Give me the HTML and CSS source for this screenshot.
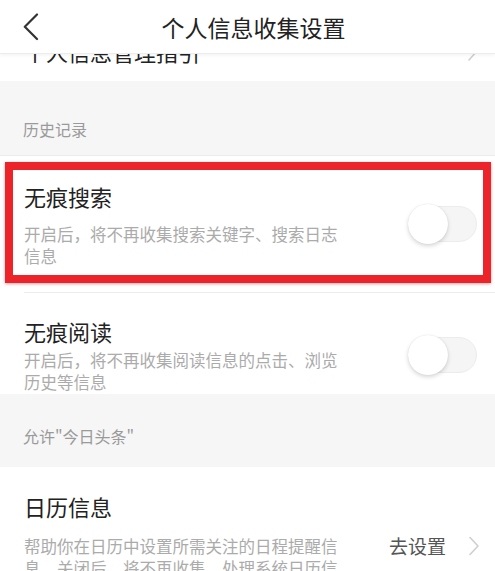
FILE: index.html
```html
<!DOCTYPE html>
<html lang="zh-CN">
<head>
<meta charset="utf-8">
<title>个人信息收集设置</title>
<link rel="stylesheet" href="styles.css">
</head>
<body>
<div class="screen">
  <header class="topbar">
    <div class="back">
      <svg width="16" height="28" viewBox="0 0 16 28"><path d="M14 1.5 L1.8 13.8 L14 26" fill="none" stroke="#333" stroke-width="2.2" stroke-linecap="round" stroke-linejoin="round"/></svg>
    </div>
    <div class="title">个人信息收集设置</div>
    <div class="spacer"></div>
  </header>
  <main class="content">
    <div class="row link-row clipped">
      <span class="row-title">个人信息管理指引</span>
      <svg class="chev" width="12" height="20" viewBox="0 0 12 20"><path d="M2 1 L10 10 L2 19" fill="none" stroke="#cfcfcf" stroke-width="1.6" stroke-linecap="round" stroke-linejoin="round"/></svg>
    </div>

    <div class="section section-first">历史记录</div>

    <div class="row-wrap marked">
      <div class="mark-box">
        <div class="row-text">
          <div class="row-title">无痕搜索</div>
          <div class="row-desc desc-loose">开启后，将不再收集搜索关键字、搜索日志信息</div>
        </div>
        <div class="switch"><div class="knob"></div></div>
      </div>
    </div>
    <div class="divider"></div>

    <div class="row toggle-row">
      <div class="row-text">
        <div class="row-title">无痕阅读</div>
        <div class="row-desc">开启后，将不再收集阅读信息的点击、浏览历史等信息</div>
      </div>
      <div class="switch"><div class="knob"></div></div>
    </div>

    <div class="section section-second">允许"今日头条"</div>

    <div class="row calendar-row">
      <div class="row-title">日历信息</div>
      <div class="calendar-body">
        <div class="row-desc">帮助你在日历中设置所需关注的日程提醒信息，关闭后，将不再收集、处理系统日历信息</div>
        <div class="action">
          <span class="action-text">去设置</span>
          <svg width="12" height="20" viewBox="0 0 12 20"><path d="M2 1.5 L10 10 L2 18.5" fill="none" stroke="#cfcfcf" stroke-width="1.6" stroke-linecap="round" stroke-linejoin="round"/></svg>
        </div>
      </div>
    </div>
  </main>
</div>
</body>
</html>
```

FILE: styles.css
```css
* { box-sizing: border-box; }
html, body {
  margin: 0;
  padding: 0;
  background: #ffffff;
}
body {
  font-family: "Noto Sans CJK SC", "Noto Sans", "Liberation Sans", sans-serif;
  color: #222;
}
.screen {
  width: 495px;
  height: 571px;
  overflow: hidden;
  display: flex;
  flex-direction: column;
  background: #fff;
}
.topbar {
  position: relative;
  z-index: 1;
  height: 54px;
  flex: none;
  display: flex;
  align-items: center;
  background: #fff;
  border-bottom: 1px solid #ececec;
  box-shadow: 0 1px 4px rgba(0, 0, 0, 0.06);
}
.back {
  width: 64px;
  padding-left: 23px;
  display: flex;
  align-items: center;
}
.back svg { display: block; }
.title {
  flex: 1;
  text-align: center;
  font-size: 23px;
  line-height: 30px;
  color: #222;
}
.spacer { width: 52px; }

.content {
  flex: 1;
  overflow: hidden;
  display: flex;
  flex-direction: column;
}

.row-title {
  font-size: 22px;
  line-height: 30px;
  color: #222;
}
.row-desc {
  font-size: 16.5px;
  line-height: 22px;
  color: #ababab;
  width: 322px;
}

.link-row {
  height: 60px;
  flex: none;
  display: flex;
  align-items: center;
  justify-content: space-between;
  padding: 0 16px 0 24px;
}
.clipped { margin-top: -33px; }
.chev { display: block; }

.section {
  flex: none;
  background: #f6f6f6;
  font-size: 16px;
  line-height: 22px;
  color: #9a9a9a;
  padding-left: 23px;
}
.section-first {
  height: 75px;
  padding-top: 37px;
  border-bottom: 1px solid #ececec;
}
.section-second {
  height: 73px;
  padding-top: 31px;
}

.row-wrap.marked {
  flex: none;
  padding: 6px 4px 9px 5px;
}
.mark-box {
  border: 8px solid #ec2328;
  box-shadow: 0 1px 3px rgba(120, 0, 0, 0.35);
  display: flex;
  align-items: center;
  justify-content: space-between;
  padding: 11px 6px 8px 11px;
}
.desc-loose { margin-top: 12px; }

.divider {
  flex: none;
  height: 1px;
  margin-left: 24px;
  background: #ececec;
}

.toggle-row {
  flex: none;
  display: flex;
  align-items: center;
  justify-content: space-between;
  padding: 23px 18px 1px 24px;
}
.toggle-row .row-desc { margin-top: 3px; }

.switch {
  flex: none;
  width: 69px;
  height: 36px;
  border-radius: 18px;
  background: #f5f5f5;
  border: 1px solid #ececec;
  display: flex;
  align-items: center;
}
.knob {
  flex: none;
  width: 40px;
  height: 40px;
  margin-left: -1px;
  border-radius: 50%;
  background: #fff;
  box-shadow: 0 2px 4px rgba(0, 0, 0, 0.16), 0 0 1px rgba(0, 0, 0, 0.12);
}

.calendar-row {
  flex: none;
  padding: 24px 15px 0 24px;
}
.calendar-body {
  display: flex;
  align-items: flex-start;
  justify-content: space-between;
  margin-top: 14px;
}
.action {
  display: flex;
  align-items: center;
  gap: 22px;
  height: 22px;
}
.action-text {
  font-size: 19px;
  line-height: 22px;
  color: #555;
}
.action svg { display: block; }
```
